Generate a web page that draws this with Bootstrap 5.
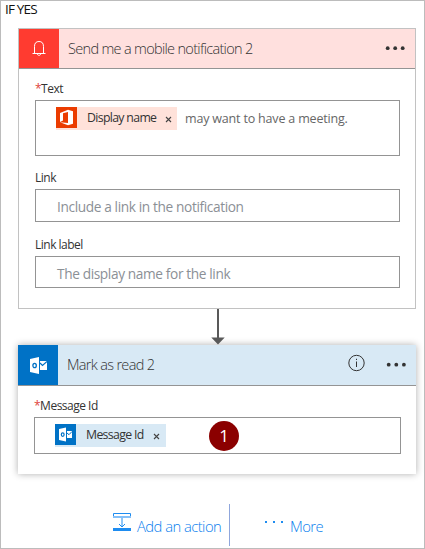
<!DOCTYPE html>
<html lang="en">
<head>
<meta charset="utf-8">
<meta name="viewport" content="width=device-width, initial-scale=1">
<title>Flow designer</title>
<link href="https://cdn.jsdelivr.net/npm/bootstrap@5.3.0/dist/css/bootstrap.min.css" rel="stylesheet">
<style>
body{font-family:"Open Sans","Noto Sans",sans-serif;background:#fff;color:#222;overflow:hidden}
.designer{width:425px;height:549px;border:1px solid #bcbcbc}
.designer svg{display:block;flex:none}
.branch{font-size:13.5px;line-height:17px;height:27px;padding-left:4px;color:#111;letter-spacing:-.8px}
.step{width:398px;margin-left:17px;background:#fff}
.step-one{height:281px;border:1px solid #c2c2c2}
.step-two{height:129px;box-shadow:0 0 7px rgba(0,0,0,.32)}
.step-head{border-bottom:1px solid #949494;font-size:14.5px;color:#333}
.step-one .step-head{height:40px;background:#ffe0de}
.step-two .step-head{height:41px;background:#d8e9f5}
.tile{width:40px;height:40px;flex:none}
.step-one .tile{height:39px;background:#ff3b30}
.step-two .tile{background:#0072c6}
.head-title{margin-left:9px;letter-spacing:-.68px;font-weight:300}
.step-fields{padding:0 15px 0 16px}
.field-name{font-size:12px;line-height:16px;letter-spacing:-.5px;color:#333}
.req{color:#e0453a}
.entry{border:1px solid #949494;background:#fff}
.ph{height:33px;padding-left:21px;font-size:13.7px;color:#8b9096;letter-spacing:-.38px}
.token{height:23px;font-size:12.3px;letter-spacing:-.67px;color:#333}
.token-office{width:121px;background:#ffe2da}
.token-outlook{width:111px;background:#d8e9f5}
.tail{font-size:12.5px;color:#666;margin-left:8px;line-height:24px;letter-spacing:-.18px}
.callout-dot{width:30px;height:30px;background:#8b0000;color:#fff;font-size:17px;line-height:29px}
.foot{color:#0a80ee;font-size:14.8px;font-weight:300;height:42px;margin-top:30px;letter-spacing:-.55px}
.sep{width:1px;height:42px;background:#8fa6dc}
.gap-arrow{height:36px;padding-left:210px}
</style>
</head>
<body>
<main class="designer">
  <div class="branch">IF YES</div>

  <section class="step step-one">
    <header class="step-head d-flex align-items-start">
      <div class="tile d-flex align-items-center justify-content-center">
        <svg width="14" height="17" viewBox="0 0 14 17" fill="none" stroke="#fff" stroke-width="1"><path d="M.5 13.500h13M2.500 13.200V6.500C2.500 3 4.200 1.500 7 1.500s4.500 1.500 4.500 5v6.700M5.300 13.700c0 2.200 3.400 2.200 3.400 0"/></svg>
      </div>
      <div class="head-title text-nowrap" style="line-height:40px">Send me a mobile notification 2</div>
      <svg class="ms-auto me-2" width="22" height="39" fill="#333"><circle cx="2.700" cy="19.200" r="1.900"/><circle cx="10.200" cy="19.200" r="1.900"/><circle cx="17.700" cy="19.200" r="1.900"/></svg>
    </header>
    <div class="step-fields">
      <div class="field-name pt-2 mt-1" style="height:31px"><span class="req">*</span>Text</div>
      <div class="entry d-flex" style="height:56px;margin-top:-4px;padding:6px 0 0 20px">
        <div class="token token-office d-flex text-nowrap">
          <svg width="21" height="21" viewBox="0 0 21 21"><path fill="#eb3c00" d="M0 0h21v21H0z"/><path fill="#fff" d="M4 6l8-3.200 5 1.500v12.400l-5 1.500-8-2.900 8 .7V5L7 6.200v7.300l-3 1.500z"/></svg>
          <span style="margin-left:10px;line-height:22px">Display name</span>
          <svg class="ms-auto" style="margin-right:5px" width="7" height="23" stroke="#444" stroke-width="1.100"><path d="M1 10l5 5M6 10l-5 5"/></svg>
        </div>
        <span class="tail text-nowrap">may want to have a meeting.</span>
      </div>
      <div class="field-name" style="height:33px;padding-top:14px">Link</div>
      <div class="entry ph d-flex align-items-center"><span class="mt-1">Include a link in the notification</span></div>
      <div class="field-name" style="height:34px;padding-top:15px">Link label</div>
      <div class="entry ph d-flex align-items-center" style="height:32px"><span class="mt-1">The display name for the link</span></div>
    </div>
  </section>

  <div class="gap-arrow"><svg width="14" height="36" fill="#595959"><path d="M6 0h2v28.500h5.700L7 35.500.3 28.500H6z"/></svg></div>

  <section class="step step-two">
    <header class="step-head d-flex align-items-start">
      <div class="tile d-flex align-items-center justify-content-center">
        <svg width="17" height="17" viewBox="0 0 17 17"><path fill="#fff" d="M0 2l9-2v17l-9-2zM10 4h7v9h-7z"/><path stroke="#0072c6" stroke-width="1.200" fill="none" d="M10 6l2.500 2.500L17 4.500"/><ellipse cx="4.600" cy="8.500" rx="1.700" ry="2.200" fill="none" stroke="#0072c6" stroke-width="1.300"/></svg>
      </div>
      <div class="head-title text-nowrap" style="line-height:40px">Mark as read 2</div>
      <svg class="ms-auto" width="17" height="36" fill="none" stroke="#333"><circle cx="8.500" cy="18" r="7.700"/><path d="M8.500 16.500v5.500M8.500 13.800v1.200"/></svg>
      <svg style="margin:0 8px 0 21px" width="22" height="39" fill="#333"><circle cx="2.700" cy="19.700" r="1.900"/><circle cx="10.300" cy="19.700" r="1.900"/><circle cx="17.900" cy="19.700" r="1.900"/></svg>
    </header>
    <div class="step-fields">
      <div class="field-name" style="height:31px;padding-top:12px"><span class="req">*</span>Message Id</div>
      <div class="entry d-flex" style="height:37px;padding:6px 0 0 20px">
        <div class="token token-outlook d-flex text-nowrap">
          <svg width="21" height="21" viewBox="0 0 21 21"><path fill="#0072c6" d="M0 0h21v21H0z"/><path fill="#fff" d="M4 5l7-1.500v14L4 16zM12 7h5v7h-5z"/><path stroke="#0072c6" fill="none" d="M12 9l2 1.700L17 7.500"/><ellipse cx="7.700" cy="10.600" rx="1.400" ry="1.800" fill="none" stroke="#0072c6" stroke-width="1.200"/></svg>
          <span style="margin-left:10px;line-height:22px">Message Id</span>
          <svg class="ms-auto" style="margin-right:6px" width="7" height="23" stroke="#444" stroke-width="1.100"><path d="M1 10l5 5M6 10l-5 5"/></svg>
        </div>
        <div class="callout-dot rounded-circle text-center" style="margin:-3px 0 0 43px">1</div>
      </div>
    </div>
  </section>

  <footer class="foot d-flex">
    <svg style="margin:9px 0 0 112px" width="18" height="18" fill="none" stroke="#1e8cf0"><path d="M.5 4V.5h17V4"/><path stroke="#85c0f8" stroke-width="2" d="M0 4h18"/><path d="M9 5v9M6 11l3 3 3-3"/><path stroke-width="3" d="M0 16.500h18"/></svg>
    <span class="text-nowrap" style="width:92px;margin-left:6px;line-height:44px">Add an action</span>
    <span class="sep"></span>
    <svg style="margin:16px 0 0 34px" width="20" height="4" fill="#1e8cf0"><path d="M1 1h2v2H1zM9 1h2v2H9zM17 1h2v2h-2z"/></svg>
    <span style="margin-left:6px;line-height:44px">More</span>
  </footer>
</main>
<script src="https://cdn.jsdelivr.net/npm/bootstrap@5.3.0/dist/js/bootstrap.bundle.min.js"></script>
</body>
</html>
